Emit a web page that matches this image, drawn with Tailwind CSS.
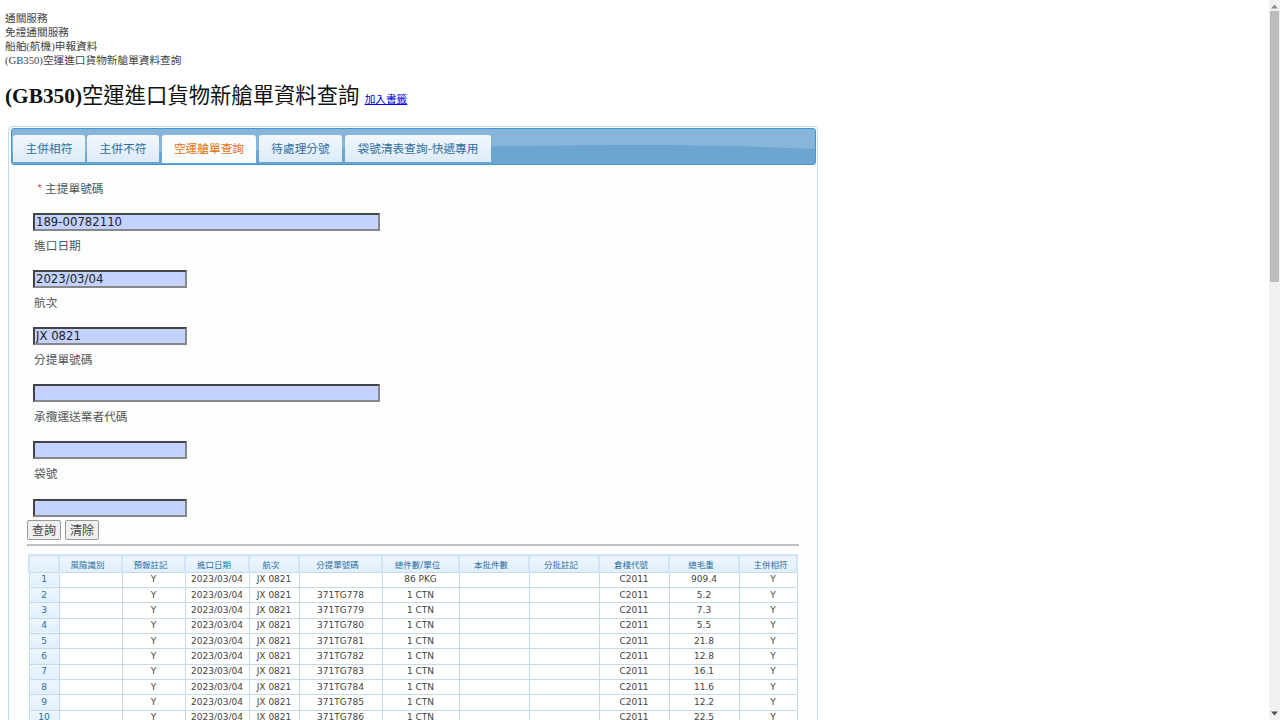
<!DOCTYPE html>
<html lang="zh-Hant">
<head>
    <meta charset="UTF-8">
    <title>(GB350)空運進口貨物新艙單資料查詢</title>
    <script src="https://cdn.jsdelivr.net/npm/@tailwindcss/browser@4"></script>
</head>
<body class="h-[720px] overflow-hidden bg-white text-black font-['Liberation_Serif','Noto_Sans_CJK_TC',serif]">

<!-- scrollbar -->
<div class="absolute right-0 top-0 w-[11px] h-[720px] bg-[#f1f1f1] z-10">
    <svg class="absolute left-[2px] top-[4px]" width="7" height="5" viewBox="0 0 7 5"><path d="M3.5 0.5 L7 4.5 H0 Z" fill="#8a8a8a"/></svg>
    <div class="absolute left-[1px] top-[11px] w-[9px] h-[271px] bg-[#bcbcbc]"></div>
    <svg class="absolute left-[2px] bottom-[4px]" width="7" height="5" viewBox="0 0 7 5"><path d="M0 0.5 H7 L3.5 4.5 Z" fill="#505050"/></svg>
</div>

<div class="pl-[5px] pt-[11px]">
    <!-- breadcrumb -->
    <div class="text-[10.67px] leading-[14px] text-[#444]">
        <div>通關服務</div>
        <div>免證通關服務</div>
        <div>船舶(航機)申報資料</div>
        <div>(GB350)空運進口貨物新艙單資料查詢</div>
    </div>

    <h1 class="mt-[15px] h-[28px] leading-[28px] text-[21.33px] whitespace-nowrap text-[#111]">
        <b>(GB350)</b>空運進口貨物新艙單資料查詢
        <a href="#" class="text-[10.67px] text-[#0000ee] underline">加入書籤</a>
    </h1>
</div>

<!-- panel -->
<div class="ml-[8px] mt-[16px] w-[810px] h-[700px] border border-[#c5dbec] rounded-[4px] bg-[#fcfdfd] pt-[1px] px-[2px]">
    <div class="relative h-[37px] w-[805px] border border-[#4297d7] rounded-[3px] bg-[#87b6da] overflow-hidden">
        <svg class="absolute left-0 bottom-0" width="805" height="20" viewBox="0 0 805 20" preserveAspectRatio="none">
            <path d="M0 9 C200 9 450 1 640 1 C720 1 770 4 805 5 V20 H0 Z" fill="#6ca5d0"/>
        </svg>
        <div class="relative flex items-start gap-[2px] pl-[1px] pt-[6px] text-[11.7px] text-[#2e6e9e] font-['Noto_Sans_CJK_TC','Noto_Sans',sans-serif]">
            <a class="w-[72px] h-[27px] leading-[26px] text-center rounded-t-[3px] bg-gradient-to-b from-[#f2f7fc] to-[#dcebf8]">主併相符</a>
            <a class="w-[72px] h-[27px] leading-[26px] text-center rounded-t-[3px] bg-gradient-to-b from-[#f2f7fc] to-[#dcebf8]">主併不符</a>
            <a class="w-[94px] h-[28px] ml-[1px] leading-[26px] text-center rounded-t-[3px] bg-[#fbfcfd] text-[#e17009]">空運艙單查詢</a>
            <a class="w-[83px] h-[27px] ml-[1px] leading-[26px] text-center rounded-t-[3px] bg-gradient-to-b from-[#f2f7fc] to-[#dcebf8]">待處理分號</a>
            <a class="w-[146px] h-[27px] ml-[1px] leading-[26px] text-center rounded-t-[3px] bg-gradient-to-b from-[#f2f7fc] to-[#dcebf8]">袋號清表查詢-快遞專用</a>
        </div>
    </div>

    <!-- form -->
    <div class="pl-[15px] text-[11.7px] text-[#555] font-['Noto_Sans_CJK_TC','Noto_Sans',sans-serif]">
        <div class="mt-[14px] h-[18px] leading-[18px] pl-[11px]"><span class="text-[#e0603a]">*</span> 主提單號碼</div>
        <input value="189-00782110" class="block mt-[16px] ml-[7px] w-[347px] h-[18px] bg-[#c4d2ff] border-2 border-t-[#444] border-l-[#444] border-b-[#888] border-r-[#888] px-[1px] text-[11.7px] leading-[14px] text-[#222] font-['DejaVu_Sans',sans-serif]">
        <div class="mt-[5px] h-[18px] leading-[18px] ml-[8px]">進口日期</div>
        <input value="2023/03/04" class="block mt-[16px] ml-[7px] w-[154px] h-[18px] bg-[#c4d2ff] border-2 border-t-[#444] border-l-[#444] border-b-[#888] border-r-[#888] px-[1px] text-[11.7px] leading-[14px] text-[#222] font-['DejaVu_Sans',sans-serif]">
        <div class="mt-[5px] h-[18px] leading-[18px] ml-[8px]">航次</div>
        <input value="JX 0821" class="block mt-[16px] ml-[7px] w-[154px] h-[18px] bg-[#c4d2ff] border-2 border-t-[#444] border-l-[#444] border-b-[#888] border-r-[#888] px-[1px] text-[11.7px] leading-[14px] text-[#222] font-['DejaVu_Sans',sans-serif]">
        <div class="mt-[5px] h-[18px] leading-[18px] ml-[8px]">分提單號碼</div>
        <input class="block mt-[16px] ml-[7px] w-[347px] h-[18px] bg-[#c4d2ff] border-2 border-t-[#444] border-l-[#444] border-b-[#888] border-r-[#888]">
        <div class="mt-[5px] h-[18px] leading-[18px] ml-[8px]">承攬運送業者代碼</div>
        <input class="block mt-[16px] ml-[7px] w-[154px] h-[18px] bg-[#c4d2ff] border-2 border-t-[#444] border-l-[#444] border-b-[#888] border-r-[#888]">
        <div class="mt-[5px] h-[18px] leading-[18px] ml-[8px]">袋號</div>
        <input class="block mt-[17px] ml-[7px] w-[154px] h-[18px] bg-[#c4d2ff] border-2 border-t-[#444] border-l-[#444] border-b-[#888] border-r-[#888]">

        <div class="flex gap-[4px] mt-[3px] ml-[1px]">
            <button class="w-[34px] h-[20px] border border-[#999] rounded-[2px] bg-[#efefef] text-[12px] leading-[18px] text-[#444]">查詢</button>
            <button class="w-[34px] h-[20px] border border-[#999] rounded-[2px] bg-[#efefef] text-[12px] leading-[18px] text-[#444]">清除</button>
        </div>
        <div class="mt-[4px] ml-[1px] w-[772px] h-[2px] bg-[#c0c0c0]"></div>

        <!-- result table -->
        <div class="mt-[8px] ml-[2px] w-[770px]">
            <table class="table-fixed border-collapse w-[768px] text-center text-[9px] text-[#444] font-['DejaVu_Sans','Noto_Sans_CJK_TC',sans-serif]">
                <colgroup>
                    <col class="w-[30px]"><col class="w-[63px]"><col class="w-[63px]"><col class="w-[64px]"><col class="w-[50px]"><col class="w-[83px]"><col class="w-[77px]"><col class="w-[70px]"><col class="w-[70px]"><col class="w-[70px]"><col class="w-[70px]"><col class="w-[58px]">
                </colgroup>
                <thead>
                    <tr id="head" class="h-[17px] bg-gradient-to-b from-[#eef6fd] to-[#dfeffc] text-[8.5px] text-[#2e6e9e] border-t-2 border-[#d3e4f4]"></tr>
                </thead>
                <tbody id="rows"></tbody>
            </table>
        </div>
    </div>
</div>

<script>
    const heads = ["", "風險識別", "預報註記", "進口日期", "航次", "分提單號碼", "總件數/單位", "本批件數", "分批註記", "倉棧代號", "總毛重"];
    const hawb = ["", "371TG778", "371TG779", "371TG780", "371TG781", "371TG782", "371TG783", "371TG784", "371TG785", "371TG786"];
    const weight = ["909.4", "5.2", "7.3", "5.5", "21.8", "12.8", "16.1", "11.6", "12.2", "22.5"];

    // last column sits off-centre in the original
    document.getElementById("head").innerHTML = heads.map(h =>
        `<th class="p-0 pt-[3px] pr-[6px] font-normal border-x-2 border-[#d3e4f4]">${h}</th>`).join("")
        + `<th class="p-0 pt-[3px] pl-[5px] font-normal border-x-2 border-[#d3e4f4]">主併相符</th>`;

    document.getElementById("rows").innerHTML = hawb.map((h, i) => {
        const cells = ["", "Y", "2023/03/04", "JX 0821", h, i == 0 ? "86 PKG" : "1 CTN", "", "", "C2011", weight[i]];
        return `<tr class="h-[15.33px]">
            <td class="p-0 h-[15.33px] leading-[13px] border border-[#c5dbec] bg-gradient-to-b from-[#eef6fd] to-[#dfeffc] text-[#2e6e9e]">${i + 1}</td>
            ${cells.map(c => `<td class="p-0 h-[15.33px] leading-[13px] border border-[#c5dbec] bg-white">${c}</td>`).join("")}
            <td class="p-0 pl-[10px] h-[15.33px] leading-[13px] border border-[#c5dbec] bg-white">Y</td>
        </tr>`;
    }).join("");
</script>

</body>
</html>
